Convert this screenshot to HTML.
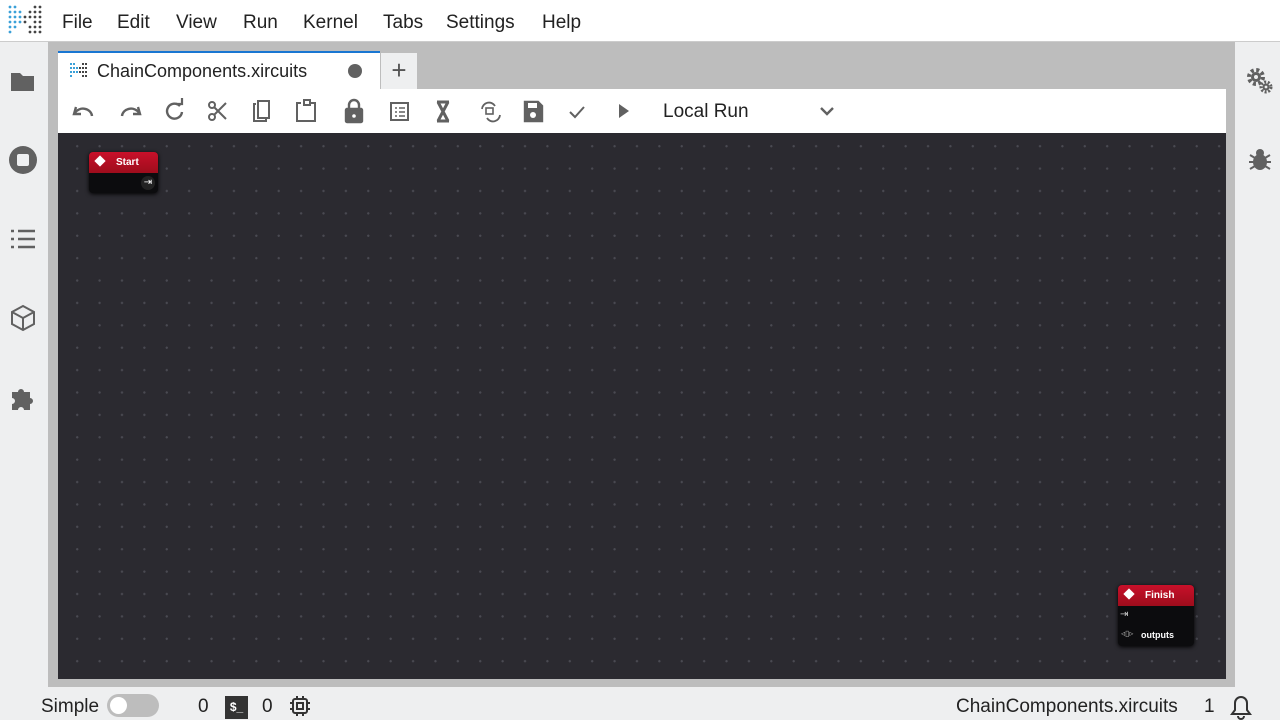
<!DOCTYPE html>
<html><head><meta charset="utf-8"><style>
*{margin:0;padding:0;box-sizing:border-box}
body{width:1280px;height:720px;overflow:hidden;background:#eeeff0;font-family:"Liberation Sans",sans-serif;position:relative;color:#222}
.menu{position:absolute;left:0;top:0;width:1280px;height:42px;background:#fff;border-bottom:1px solid #ccc}
.menu span{position:absolute;top:12px;font-size:19px;color:#222}
.main{position:absolute;left:48px;top:42px;width:1187px;height:645px;background:#bdbdbd}
.tab{position:absolute;left:58px;top:51px;width:322px;height:38px;background:#fff;border-top:2px solid #1976d2}
.plus{position:absolute;left:381px;top:53px;width:36px;height:36px;background:#eeeff0;font-size:26px;text-align:center;line-height:34px;color:#555}
.tb{position:absolute;left:58px;top:89px;width:1168px;height:44px;background:#fff}
.canvas{position:absolute;left:58px;top:133px;width:1168px;height:546px;background-color:#2b2a30;background-image:radial-gradient(circle,#4a4a52 1px,transparent 1.3px);background-size:22.4px 22.4px;background-position:8px 2px}
.node{position:absolute;background:#0c0c0e;border-radius:4px;box-shadow:0 1px 4px #000}
.nh{background:linear-gradient(#c8102a,#9e0d1c);height:21px;border-radius:4px 4px 0 0;color:#fff;font-size:10px;font-weight:bold;line-height:21px}
.status{position:absolute;top:696px;font-size:19px;color:#222}
svg{position:absolute}
</style></head><body>
<div class="menu">
<svg style="left:7px;top:4px" width="36" height="36" viewBox="0 0 36 36"><g fill="#3aa0d8"><circle cx="3" cy="3" r="1.4"/><circle cx="3" cy="8" r="1.4"/><circle cx="3" cy="13" r="1.4"/><circle cx="3" cy="18" r="1.4"/><circle cx="3" cy="23" r="1.4"/><circle cx="3" cy="28" r="1.4"/><circle cx="8" cy="3" r="1.4"/><circle cx="8" cy="8" r="1.4"/><circle cx="8" cy="13" r="1.4"/><circle cx="8" cy="18" r="1.4"/><circle cx="8" cy="23" r="1.4"/><circle cx="13" cy="8" r="1.4"/><circle cx="13" cy="13" r="1.4"/><circle cx="13" cy="18" r="1.4"/></g><g fill="#444"><circle cx="18" cy="13" r="1.4"/><circle cx="18" cy="18" r="1.4"/><circle cx="23" cy="8" r="1.4"/><circle cx="23" cy="13" r="1.4"/><circle cx="28" cy="3" r="1.4"/><circle cx="28" cy="8" r="1.4"/><circle cx="28" cy="13" r="1.4"/><circle cx="28" cy="18" r="1.4"/><circle cx="28" cy="23" r="1.4"/><circle cx="28" cy="28" r="1.4"/><circle cx="33" cy="3" r="1.4"/><circle cx="33" cy="8" r="1.4"/><circle cx="33" cy="13" r="1.4"/><circle cx="33" cy="18" r="1.4"/><circle cx="33" cy="23" r="1.4"/><circle cx="33" cy="28" r="1.4"/><circle cx="23" cy="28" r="1.4"/><circle cx="23" cy="23" r="1.4"/></g></svg>
<span style="left:62px">File</span><span style="left:117px">Edit</span><span style="left:176px">View</span><span style="left:243px">Run</span><span style="left:303px">Kernel</span><span style="left:383px">Tabs</span><span style="left:446px">Settings</span><span style="left:542px">Help</span>
</div>
<svg style="left:10px;top:70px" width="26" height="22"><path d="M1 3h9l3 3h11v15H1z" fill="#616161"/></svg>
<svg style="left:8px;top:145px" width="30" height="30"><circle cx="15" cy="15" r="14" fill="#616161"/><rect x="9" y="9" width="12" height="12" rx="2" fill="#eeeff0"/></svg>
<svg style="left:10px;top:228px" width="26" height="22" stroke="#616161" stroke-width="2.4"><path d="M1 3h3M1 11h3M1 19h3M8 3h17M8 11h17M8 19h17"/></svg>
<svg style="left:9px;top:304px" width="28" height="28" fill="none" stroke="#616161" stroke-width="2"><path d="M14 2l11 6v12l-11 6-11-6V8zM3 8l11 6 11-6M14 14v12"/></svg>
<svg style="left:9px;top:384px" width="28" height="28"><path d="M3 8h6a3 3 0 1 1 6 0h6v6a3 3 0 1 1 0 6v6h-6a3 3 0 1 0-6 0H3v-6a3 3 0 1 0 0-6z" fill="#616161"/></svg>
<svg style="left:1246px;top:67px" width="28" height="28"><circle cx="10" cy="10" r="7" fill="none" stroke="#616161" stroke-width="4" stroke-dasharray="3 2.5"/><circle cx="10" cy="10" r="5" fill="#616161"/><circle cx="10" cy="10" r="2" fill="#eeeff0"/><circle cx="20" cy="20" r="5" fill="none" stroke="#616161" stroke-width="3" stroke-dasharray="2 1.6"/><circle cx="20" cy="20" r="3.5" fill="#616161"/><circle cx="20" cy="20" r="1.4" fill="#eeeff0"/></svg>
<svg style="left:1248px;top:147px" width="24" height="26"><ellipse cx="12" cy="15" rx="7" ry="8" fill="#616161"/><circle cx="12" cy="6" r="4" fill="#616161"/><path d="M2 8l5 3M22 8l-5 3M1 15h5M23 15h-5M2 22l5-3M22 22l-5-3" stroke="#616161" stroke-width="2"/></svg>
<div class="main"></div>
<div class="tab">
<svg style="left:12px;top:9px" width="18" height="18"><g fill="#3aa0d8"><rect x="0" y="1" width="2" height="2"/><rect x="0" y="5" width="2" height="2"/><rect x="0" y="9" width="2" height="2"/><rect x="0" y="13" width="2" height="2"/><rect x="3" y="1" width="2" height="2"/><rect x="3" y="5" width="2" height="2"/><rect x="3" y="9" width="2" height="2"/><rect x="6" y="5" width="2" height="2"/><rect x="6" y="9" width="2" height="2"/></g><g fill="#444"><rect x="9" y="5" width="2" height="2"/><rect x="9" y="9" width="2" height="2"/><rect x="12" y="1" width="2" height="2"/><rect x="12" y="5" width="2" height="2"/><rect x="12" y="9" width="2" height="2"/><rect x="12" y="13" width="2" height="2"/><rect x="15" y="1" width="2" height="2"/><rect x="15" y="5" width="2" height="2"/><rect x="15" y="9" width="2" height="2"/><rect x="15" y="13" width="2" height="2"/></g></svg>
<span style="position:absolute;left:39px;top:8px;font-size:18px;color:#222">ChainComponents.xircuits</span>
<div style="position:absolute;left:290px;top:11px;width:14px;height:14px;border-radius:50%;background:#616161"></div>
</div>
<div class="plus">+</div>
<div class="tb">
<svg width="800" height="44" fill="none" stroke="#616161" stroke-width="2.4">
<path d="M18 18l-2 7h7"/><path d="M17 24a9 8 0 0 1 17 3"/>
<path d="M80 18l2 7h-7"/><path d="M81 24a9 8 0 0 0-17 3"/>
<path d="M122 17a7.5 7.5 0 1 0 2 6"/><path d="M118 15h6v-6" stroke-width="2.2"/>
<g stroke-width="2"><circle cx="154" cy="28" r="3"/><circle cx="154" cy="16" r="3"/><path d="M156 18l12 12M156 26l12-12"/></g>
<path d="M198 15h-2v17h12v-2M200 12h11v17h-11z" stroke-width="2"/>
<path d="M243 14h-4v18h18V14h-4M246 11h6v5h-6z" stroke-width="2"/>
<rect x="288" y="20" width="16" height="13" rx="1" fill="#616161"/><path d="M291 20v-4a5 5 0 0 1 10 0v4"/><circle cx="296" cy="27" r="1.8" fill="#fff" stroke="none"/>
<rect x="333" y="14" width="17" height="17" stroke-width="2"/><path d="M337 19h2M341 19h6M337 23h2M341 23h6M337 27h2M341 27h6" stroke-width="1.6"/>
<path d="M379 13h12M379 32h12M380 13l10 19M390 13l-10 19" stroke-width="3"/>
<path d="M424 20a7 7 0 0 1 13-3M442 26a7 7 0 0 1-13 3" stroke-width="1.8"/><rect x="428" y="19" width="7" height="6" stroke-width="1.6"/>
<path d="M467 13h13l4 4v15h-17z" fill="#616161"/><circle cx="475" cy="26" r="3" fill="#fff" stroke="none"/><rect x="470" y="14" width="9" height="5" fill="#fff" stroke="none"/>
<path d="M512 23l5 5 9-10" stroke-width="2"/>
<path d="M561 15l10 7-10 7z" fill="#616161" stroke="none"/>
<path d="M763 19l6 6 6-6"/>
</svg>
<span style="position:absolute;left:605px;top:12px;font-size:19px;color:#222">Local Run</span>
</div>
<div class="canvas">
<div class="node" style="left:31px;top:19px;width:69px;height:41px">
<div class="nh"><span style="display:inline-block;width:8px;height:8px;background:#fff;transform:rotate(45deg);margin:0 12px 0 7px"></span>Start</div>
<div style="position:absolute;right:3px;top:24px;width:14px;height:14px;border-radius:50%;background:#222;color:#fff;font-size:10px;text-align:center;line-height:14px">⇥</div>
</div>
<div class="node" style="left:1060px;top:452px;width:76px;height:61px">
<div class="nh"><span style="display:inline-block;width:8px;height:8px;background:#fff;transform:rotate(45deg);margin:0 12px 0 7px"></span>Finish</div>
<div style="position:absolute;left:2px;top:24px;color:#ccc;font-size:10px">⇥</div>
<div style="position:absolute;left:3px;top:44px;color:#aaa;font-size:8px">◃▯▹</div>
<div style="position:absolute;left:23px;top:45px;color:#fff;font-size:9px;font-weight:bold">outputs</div>
</div>
</div>
<span class="status" style="left:41px">Simple</span>
<div style="position:absolute;left:107px;top:694px;width:52px;height:23px;border-radius:12px;background:#bdbdbd"><div style="position:absolute;left:3px;top:3px;width:17px;height:17px;border-radius:50%;background:#fff"></div></div>
<span class="status" style="left:198px">0</span>
<div style="position:absolute;left:225px;top:696px;width:23px;height:23px;background:#333;color:#fff;font-size:12px;font-weight:bold;text-align:center;line-height:23px">$_</div>
<span class="status" style="left:262px">0</span>
<svg style="left:289px;top:695px" width="22" height="22" fill="none" stroke="#333" stroke-width="2"><rect x="4" y="4" width="14" height="14" rx="2"/><rect x="8" y="8" width="6" height="6"/><path d="M8 1v3M14 1v3M8 18v3M14 18v3M1 8h3M1 14h3M18 8h3M18 14h3"/></svg>
<span class="status" style="left:956px">ChainComponents.xircuits</span>
<span class="status" style="left:1204px">1</span>
<svg style="left:1228px;top:692px" width="26" height="28" fill="none" stroke="#333" stroke-width="2"><path d="M4 22h18l-3-4V11a6 6 0 0 0-12 0v7zM10 24a3 3 0 0 0 6 0"/></svg>
</body></html>
